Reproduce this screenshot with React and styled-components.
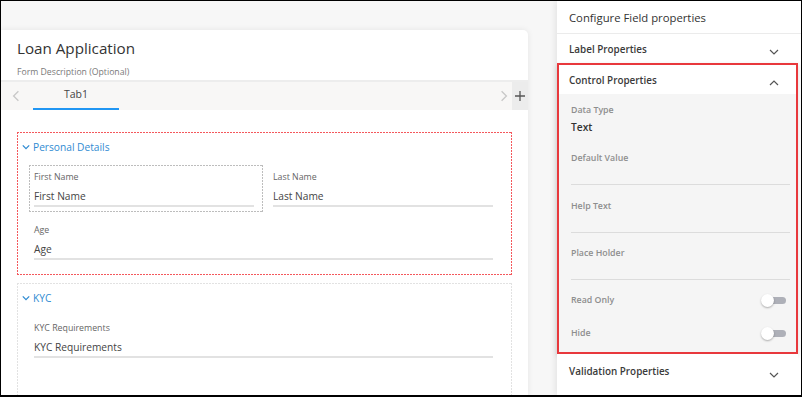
import styled, { createGlobalStyle, css } from "styled-components";

const GlobalStyle = createGlobalStyle`
  html, body { margin: 0; padding: 0; }
  body {
    font-family: "Open Sans", "Noto Sans", sans-serif;
    background: #f7f7f7;
    color: #333;
  }
  * { box-sizing: border-box; }
`;

// dotted outline drawn with gradients so the dots stay crisp: 2px on, 1px off
const dots = (color) => css`
  background-image:
    repeating-linear-gradient(90deg, ${color} 0 2px, transparent 2px 3px),
    repeating-linear-gradient(90deg, ${color} 0 2px, transparent 2px 3px),
    repeating-linear-gradient(180deg, ${color} 0 2px, transparent 2px 3px),
    repeating-linear-gradient(180deg, ${color} 0 2px, transparent 2px 3px);
  background-size: 100% 1px, 100% 1px, 1px 100%, 1px 100%;
  background-position: top left, bottom left, top left, top right;
  background-repeat: no-repeat;
`;

const Frame = styled.div`
  width: 802px;
  height: 397px;
  border: 1px solid #000;
  border-bottom-width: 2px;
  background: #f7f7f7;
  display: flex;
  overflow: hidden;
`;

const Canvas = styled.div`
  width: 527px;
  padding-top: 29px;
  flex-shrink: 0;
`;

const Card = styled.div`
  background: #fff;
  height: 100%;
  border-top-right-radius: 5px;
  box-shadow: 0 0 6px rgba(0, 0, 0, 0.08);
`;

const CardHeader = styled.div`
  padding: 8px 16px 0;
  height: 52px;
  border-bottom: 2px solid #ededed;
`;

const Title = styled.div`
  font-size: 15.2px;
  line-height: 21px;
  color: #333;
`;

const Description = styled.div`
  font-size: 8.7px;
  line-height: 12px;
  color: #7a7a7a;
  margin-top: 7px;
`;

const TabBar = styled.div`
  display: flex;
  align-items: stretch;
  height: 28px;
  background: #f8f7f6;
`;

const Arrow = styled.div`
  width: ${(p) => p.$w || 32}px;
  display: flex;
  align-items: center;
  justify-content: center;
  padding-right: ${(p) => p.$pr || 0}px;
  color: #c8c8c8;
`;

const Tab = styled.div`
  width: 86px;
  display: flex;
  align-items: center;
  justify-content: center;
  font-size: 10.5px;
  color: #444;
  padding-bottom: 2px;
  border-bottom: 2px solid #2196f3;
`;

const TabSpacer = styled.div`
  flex: 1;
`;

const AddTab = styled.div`
  width: 16px;
  background: #ececec;
  display: flex;
  align-items: center;
  justify-content: center;
  color: #555;
`;

const Body = styled.div`
  padding: 22px 16px 0;
  display: flex;
  flex-direction: column;
  gap: 8px;
`;

const Section = styled.div`
  padding: 1px 11px 10px 12px;
  min-height: ${(p) => p.$minH || 0}px;
  ${(p) => dots(p.$active ? "#f4585c" : "#e2e2e2")}
`;

const SectionHead = styled.div`
  display: flex;
  align-items: center;
  gap: 3px;
  height: 27px;
  margin-left: -7px;
  color: #2f8bd2;
  font-size: 10.2px;
`;

const FieldGrid = styled.div`
  margin-top: 5px;
  display: grid;
  grid-template-columns: 234px 234px;
  column-gap: 5px;
  row-gap: 6px;
`;

const Field = styled.div`
  grid-column: ${(p) => (p.$full ? "1 / -1" : "auto")};
  height: 47px;
  padding: 6px 9px 0 5px;
  ${(p) => p.$selected && dots("#bdbdbd")}
`;

const FieldLabel = styled.div`
  font-size: 8.8px;
  line-height: 12px;
  color: #666;
`;

const FieldValue = styled.div`
  font-size: 10.2px;
  line-height: 14px;
  color: #444;
  margin-top: 6px;
  padding-bottom: 2px;
  border-bottom: 2px solid #e2e2e2;
`;

const Panel = styled.div`
  margin-left: 29px;
  flex: 1;
  background: #fff;
  box-shadow: -2px 0 6px rgba(0, 0, 0, 0.08);
  display: flex;
  flex-direction: column;
`;

const PanelTitle = styled.div`
  height: 33px;
  padding: 0 12px;
  display: flex;
  align-items: center;
  font-size: 11.3px;
  color: #333;
  border-bottom: 1px solid #ebebeb;
`;

const Group = styled.div`
  margin-right: 3px;
  border: ${(p) => (p.$highlight ? "2px solid #e8383c" : "none")};
  box-shadow: ${(p) => (p.$highlight ? "0 2px 5px rgba(0,0,0,0.15)" : "none")};
`;

const GroupHead = styled.div`
  height: ${(p) => p.$h || 29}px;
  padding: 0 ${(p) => (p.$inset ? 17 : 19)}px 0 ${(p) => (p.$inset ? 10 : 12)}px;
  display: flex;
  align-items: center;
  justify-content: space-between;
  font-size: 9.9px;
  font-weight: 600;
  color: #3a3a3a;
  background: #fff;
`;

const Chevron = styled.span`
  display: flex;
  margin-top: ${(p) => p.$dy || 0}px;
  color: #555;
`;

const GroupBody = styled.div`
  background: #f5f5f5;
  padding: 9px 6px 0 12px;
  height: 258px;
`;

const PropLabel = styled.div`
  font-size: 8.8px;
  font-weight: 600;
  line-height: 14px;
  color: #8e8e8e;
`;

const PropValue = styled.div`
  font-size: 10.2px;
  font-weight: 600;
  line-height: 16px;
  color: #333;
  margin-top: 2px;
`;

const PropInput = styled.div`
  height: ${(p) => p.$h}px;
  padding-top: ${(p) => p.$pt}px;
  border-bottom: 1px solid #dcdcdc;
`;

const SwitchRow = styled.div`
  display: flex;
  align-items: center;
  justify-content: space-between;
  height: ${(p) => p.$h}px;
  padding-right: 4px;
`;

const Switch = styled.div`
  position: relative;
  width: 25px;
  height: 13px;
  &::before {
    content: "";
    position: absolute;
    right: 0;
    top: 3px;
    width: 20px;
    height: 7px;
    border-radius: 4px;
    background: #aeb0b8;
  }
  &::after {
    content: "";
    position: absolute;
    left: 0;
    top: 0;
    width: 13px;
    height: 13px;
    border-radius: 50%;
    background: #fff;
    box-shadow: 0 1px 2px rgba(0, 0, 0, 0.3);
  }
`;

const ChevronIcon = ({ dir = "down", size = 9, color = "currentColor", width = 1.2 }) => {
  const pts = {
    down: "1,3 5,7 9,3",
    up: "1,7 5,3 9,7",
    left: "7,1 3,5 7,9",
    right: "3,1 7,5 3,9",
  }[dir];
  return (
    <svg width={size} height={size} viewBox="0 0 10 10">
      <polyline points={pts} fill="none" stroke={color} strokeWidth={width} />
    </svg>
  );
};

const PlusIcon = () => (
  <svg width="12" height="12" viewBox="0 0 12 12">
    <path d="M6 1v10M1 6h10" stroke="#555" strokeWidth="1.3" />
  </svg>
);

export default function App() {
  return (
    <>
      <GlobalStyle />
      <Frame>
        <Canvas>
          <Card>
            <CardHeader>
              <Title>Loan Application</Title>
              <Description>Form Description (Optional)</Description>
            </CardHeader>
            <TabBar>
              <Arrow $pr={3}>
                <ChevronIcon dir="left" size={12} width={1.1} />
              </Arrow>
              <Tab>Tab1</Tab>
              <TabSpacer />
              <Arrow $w={16}>
                <ChevronIcon dir="right" size={12} width={1.1} />
              </Arrow>
              <AddTab>
                <PlusIcon />
              </AddTab>
            </TabBar>
            <Body>
              <Section $active>
                <SectionHead>
                  <ChevronIcon dir="down" size={8} width={1.6} />
                  Personal Details
                </SectionHead>
                <FieldGrid>
                  <Field $selected>
                    <FieldLabel>First Name</FieldLabel>
                    <FieldValue>First Name</FieldValue>
                  </Field>
                  <Field>
                    <FieldLabel>Last Name</FieldLabel>
                    <FieldValue>Last Name</FieldValue>
                  </Field>
                  <Field $full>
                    <FieldLabel>Age</FieldLabel>
                    <FieldValue>Age</FieldValue>
                  </Field>
                </FieldGrid>
              </Section>
              <Section $minH={120}>
                <SectionHead>
                  <ChevronIcon dir="down" size={8} width={1.6} />
                  KYC
                </SectionHead>
                <FieldGrid>
                  <Field $full>
                    <FieldLabel>KYC Requirements</FieldLabel>
                    <FieldValue>KYC Requirements</FieldValue>
                  </Field>
                </FieldGrid>
              </Section>
            </Body>
          </Card>
        </Canvas>
        <Panel>
          <PanelTitle>Configure Field properties</PanelTitle>
          <Group>
            <GroupHead>
              Label Properties
              <Chevron $dy={6}>
                <ChevronIcon dir="down" size={10} />
              </Chevron>
            </GroupHead>
          </Group>
          <Group $highlight>
            <GroupHead $inset>
              Control Properties
              <Chevron $dy={6}>
                <ChevronIcon dir="up" size={10} />
              </Chevron>
            </GroupHead>
            <GroupBody>
              <PropLabel>Data Type</PropLabel>
              <PropValue>Text</PropValue>
              <PropInput $h={50} $pt={16}>
                <PropLabel>Default Value</PropLabel>
              </PropInput>
              <PropInput $h={48} $pt={14}>
                <PropLabel>Help Text</PropLabel>
              </PropInput>
              <PropInput $h={47} $pt={13}>
                <PropLabel>Place Holder</PropLabel>
              </PropInput>
              <SwitchRow $h={40}>
                <PropLabel>Read Only</PropLabel>
                <Switch />
              </SwitchRow>
              <SwitchRow $h={26}>
                <PropLabel>Hide</PropLabel>
                <Switch />
              </SwitchRow>
            </GroupBody>
          </Group>
          <Group>
            <GroupHead $h={34}>
              Validation Properties
              <Chevron $dy={8}>
                <ChevronIcon dir="down" size={10} />
              </Chevron>
            </GroupHead>
          </Group>
        </Panel>
      </Frame>
    </>
  );
}
